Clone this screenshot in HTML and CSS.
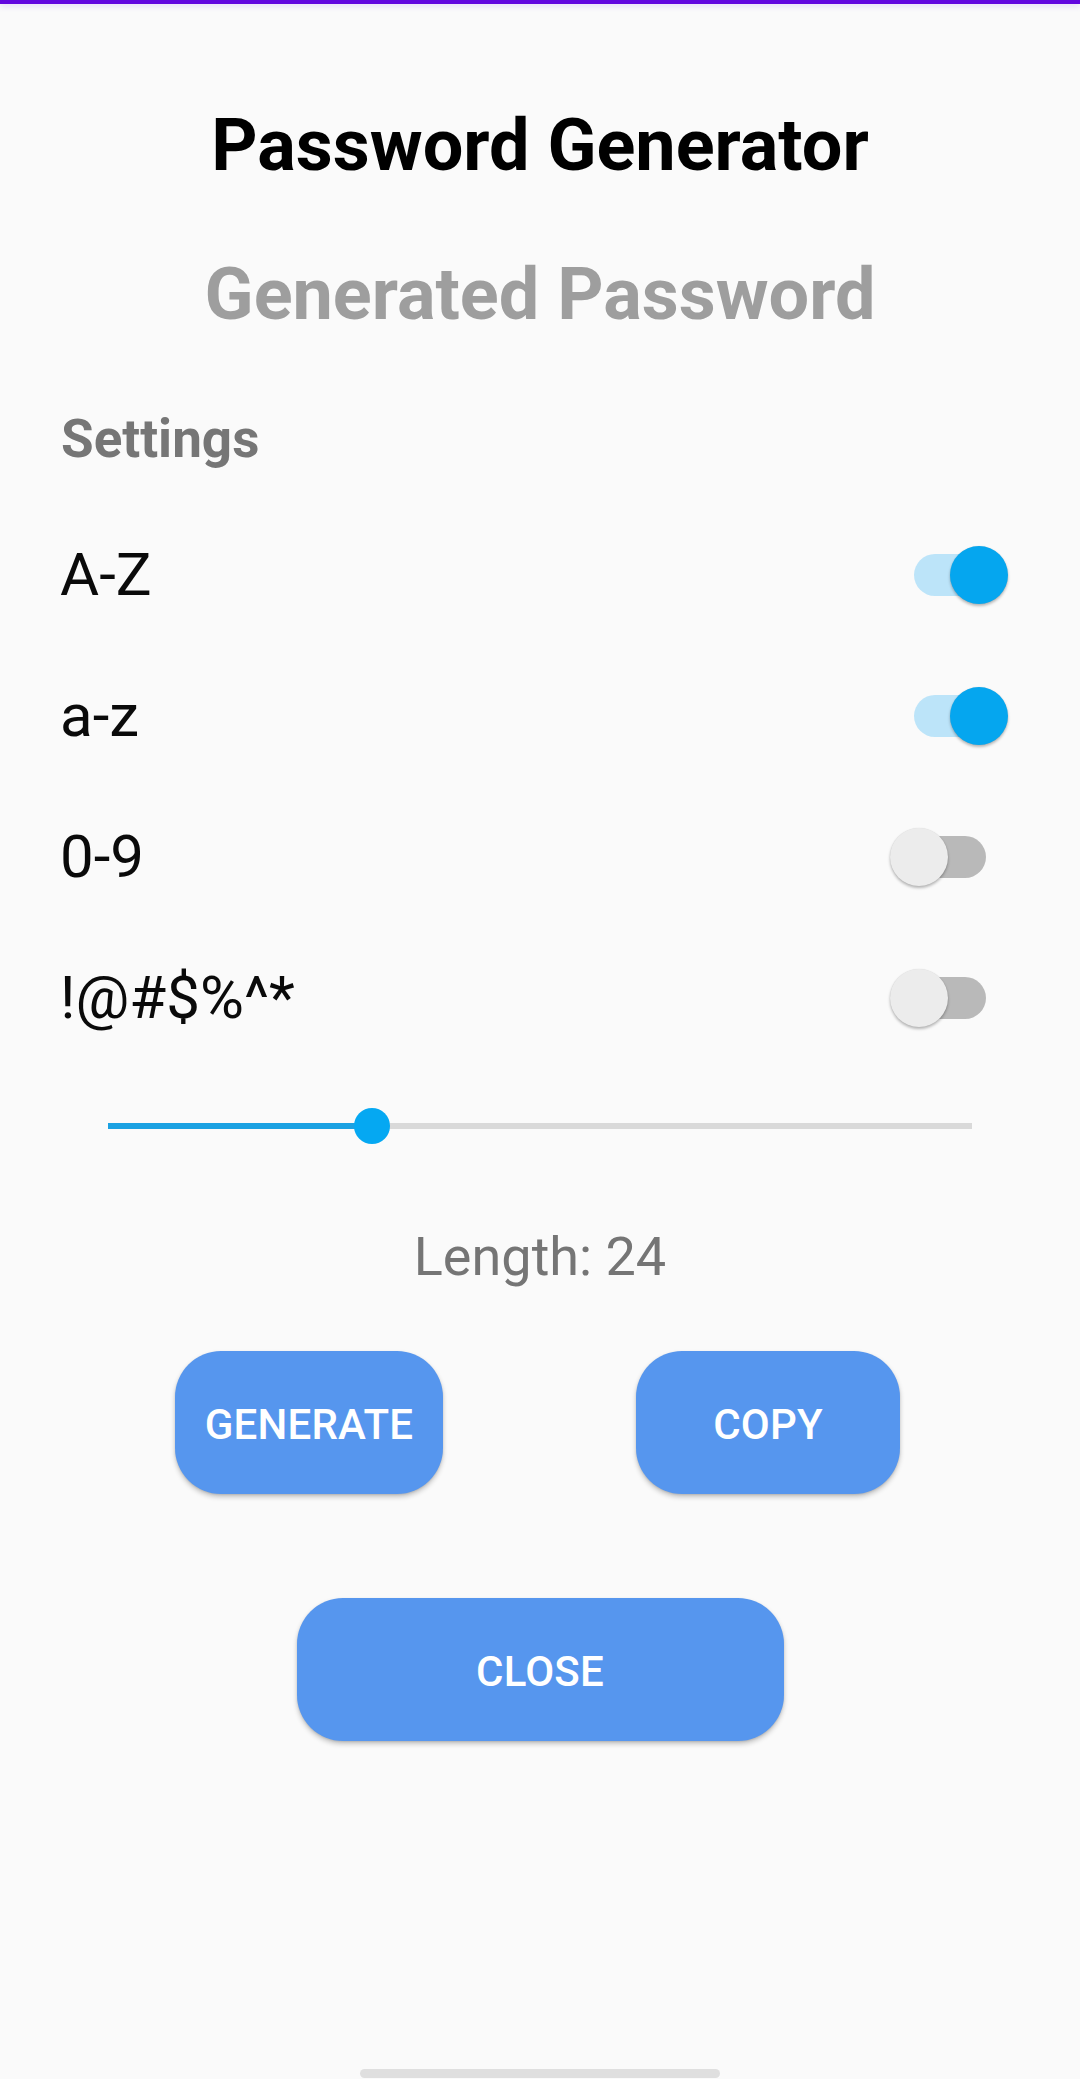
FILE: index.html
```html
<!DOCTYPE html>
<html lang="en">
<head>
<meta charset="utf-8">
<title>Password Generator</title>
<link rel="stylesheet" href="styles.css">
</head>
<body>
<div class="screen">
  <div class="appbar-edge"></div>
  <main class="content">
    <h1 class="title">Password Generator</h1>
    <p class="generated">Generated Password</p>
    <h2 class="settings">Settings</h2>
    <ul class="options">
      <li class="option">
        <span class="label">A-Z</span>
        <span class="switch on"><span class="track"></span><span class="thumb"></span></span>
      </li>
      <li class="option">
        <span class="label">a-z</span>
        <span class="switch on"><span class="track"></span><span class="thumb"></span></span>
      </li>
      <li class="option">
        <span class="label">0-9</span>
        <span class="switch"><span class="track"></span><span class="thumb"></span></span>
      </li>
      <li class="option">
        <span class="label">!@#$%^*</span>
        <span class="switch"><span class="track"></span><span class="thumb"></span></span>
      </li>
    </ul>
    <div class="slider">
      <div class="slider-track"><div class="slider-fill" style="width:30.6%"></div></div>
      <div class="slider-thumb" style="left:30.6%"></div>
    </div>
    <p class="length">Length: 24</p>
    <div class="btn-row">
      <button class="btn btn-generate">GENERATE</button>
      <button class="btn btn-copy">COPY</button>
    </div>
    <div class="btn-row close-row">
      <button class="btn btn-close">CLOSE</button>
    </div>
  </main>
  <div class="home-indicator"></div>
</div>
</body>
</html>
```

FILE: styles.css
```css
* { box-sizing: border-box; }
html, body {
  margin: 0;
  padding: 0;
  background: #fafafa;
}
body {
  font-family: Roboto, "Noto Sans", "Liberation Sans", sans-serif;
  color: #000;
}
.screen {
  display: flex;
  flex-direction: column;
  height: 2079px;
  overflow: hidden;
}
.appbar-edge {
  height: 4px;
  background: #6205df;
  box-shadow: 0 2px 6px rgba(98, 0, 238, 0.18);
  flex: none;
}
.content {
  display: flex;
  flex-direction: column;
  padding-top: 100px;
}
.title {
  margin: 0;
  font-size: 72px;
  line-height: 84px;
  font-weight: 700;
  text-align: center;
  color: #000;
}
.generated {
  margin: 65px 0 0;
  font-size: 72px;
  line-height: 84px;
  font-weight: 700;
  text-align: center;
  color: #9e9e9e;
}
.settings {
  margin: 71px 0 0;
  padding-left: 61px;
  font-size: 53px;
  line-height: 62px;
  font-weight: 700;
  color: #767676;
}
.options {
  list-style: none;
  margin: 34px 0 0;
  padding: 0;
}
.option {
  display: flex;
  align-items: center;
  justify-content: space-between;
  height: 141px;
  padding: 0 70px 0 60px;
}
.label {
  font-size: 60px;
  line-height: 141px;
  font-weight: 400;
  color: #0a0a0a;
}
.switch {
  position: relative;
  width: 120px;
  height: 60px;
  flex: none;
}
.track {
  position: absolute;
  left: 24px;
  top: 9px;
  width: 72px;
  height: 42px;
  border-radius: 21px;
  background: #b9b9b9;
}
.thumb {
  position: absolute;
  left: 0;
  top: 1px;
  width: 58px;
  height: 58px;
  border-radius: 50%;
  background: #ececec;
  box-shadow: 0 2px 3px rgba(0, 0, 0, 0.28), 0 0 1px rgba(0, 0, 0, 0.12);
}
.switch.on .track { background: #bce4f9; }
.switch.on .thumb {
  left: 60px;
  background: #05a6ef;
}
.slider {
  position: relative;
  margin: 40px 108px 0;
  height: 36px;
}
.slider-track {
  position: absolute;
  left: 0;
  right: 0;
  top: 15px;
  height: 6px;
  background: #d9d9d9;
}
.slider-fill {
  height: 100%;
  background: #1ba1e2;
}
.slider-thumb {
  position: absolute;
  top: 0;
  width: 36px;
  height: 36px;
  margin-left: -18px;
  border-radius: 50%;
  background: #05a8f2;
}
.length {
  margin: 81px 0 0;
  font-size: 54px;
  line-height: 64px;
  font-weight: 400;
  text-align: center;
  color: #757575;
}
.btn-row {
  display: flex;
  justify-content: center;
  gap: 193px;
  margin-top: 62px;
  padding-right: 5px;
}
.close-row {
  margin-top: 104px;
  padding-right: 0;
}
.btn {
  height: 143px;
  border: none;
  border-radius: 46px;
  background: #5696ee;
  color: #fff;
  font-family: Roboto, "Noto Sans", "Liberation Sans", sans-serif;
  font-size: 42px;
  font-weight: 500;
  letter-spacing: 0.005em;
  line-height: 138px;
  padding: 5px 0 0;
  box-shadow: 0 3px 5px rgba(0, 0, 0, 0.22), 0 1px 2px rgba(0, 0, 0, 0.1);
}
.btn-generate { width: 268px; }
.btn-copy { width: 264px; }
.btn-close { width: 487px; }
.home-indicator {
  margin: auto auto 1px;
  width: 360px;
  height: 9px;
  border-radius: 5px;
  background: #dfdfdf;
  flex: none;
}
```
